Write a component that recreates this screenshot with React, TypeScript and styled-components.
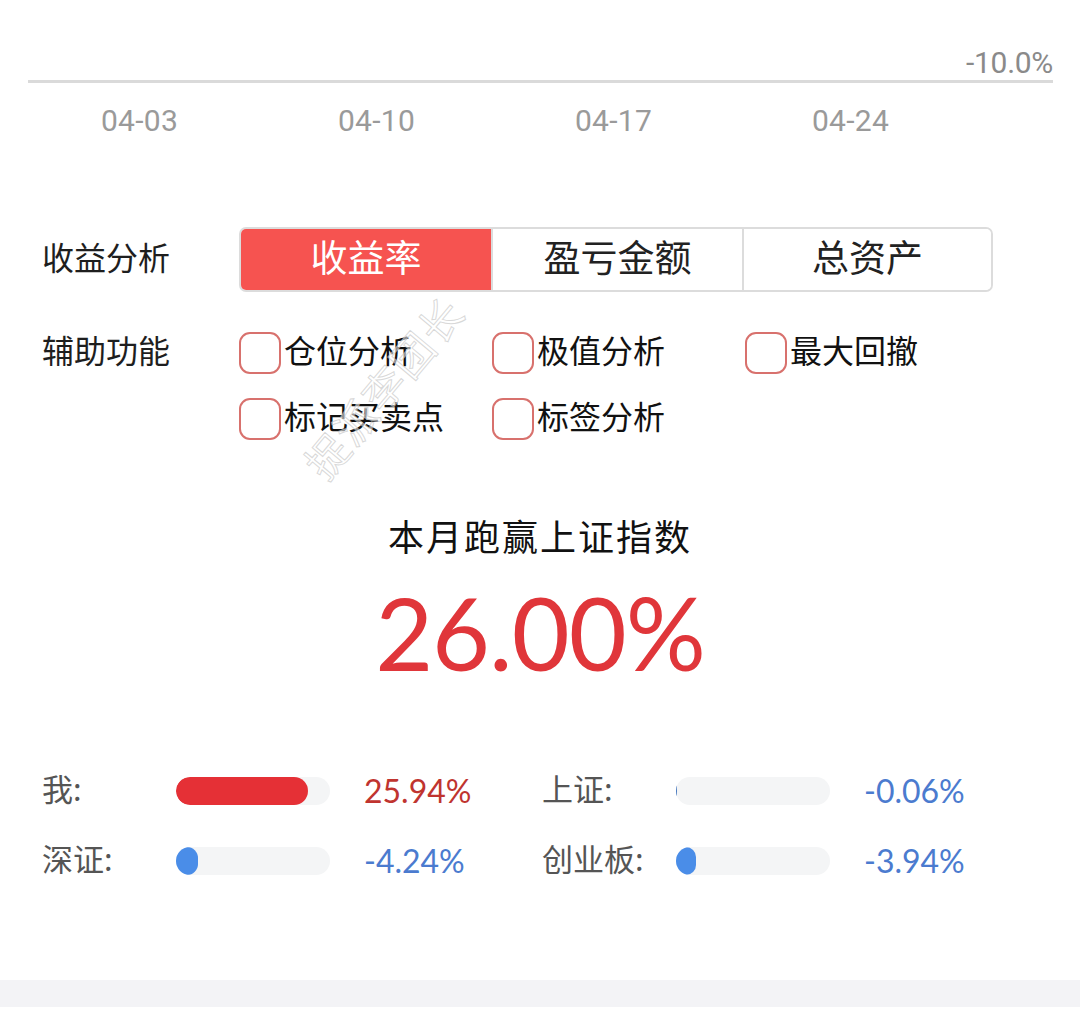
import React from "react";
import styled, { createGlobalStyle } from "styled-components";

const GlobalStyle = createGlobalStyle`
  html, body { margin: 0; padding: 0; background: #ffffff; }
  body { font-family: Lato, "Noto Sans CJK SC", sans-serif; }
`;

const Page = styled.div`
  position: relative;
  width: 1080px;
  height: 1018px;
  overflow: hidden;
  display: flex;
  flex-direction: column;
  background: #ffffff;
`;

const Axis = styled.div`
  padding: 47px 27px 0 28px;
  display: flex;
  flex-direction: column;
`;

const YLabel = styled.div`
  text-align: right;
  font-family: Roboto, sans-serif;
  font-size: 30px;
  line-height: 31px;
  color: #8a8a8a;
  letter-spacing: -0.3px;
`;

const AxisLine = styled.div`
  margin-top: 2px;
  height: 3px;
  background: #dadada;
`;

const DateRow = styled.div`
  margin-top: 22px;
  padding-left: 21px;
  display: grid;
  grid-template-columns: repeat(4, 237px);
`;

const DateLabel = styled.div`
  text-align: center;
  font-family: Roboto, sans-serif;
  font-size: 30px;
  line-height: 32px;
  color: #9a9a9a;
  letter-spacing: 0.3px;
`;

const FieldRow = styled.div<{ $top: number }>`
  margin-top: ${(p) => p.$top}px;
  padding-left: 42px;
  display: flex;
  align-items: flex-start;
`;

const FieldLabel = styled.div<{ $h: number }>`
  width: 197px;
  height: ${(p) => p.$h}px;
  box-sizing: border-box;
  padding-bottom: 8px;
  display: flex;
  align-items: center;
  font-family: "Noto Sans CJK SC", sans-serif;
  font-size: 32px;
  color: #1e1e1e;
`;

const Segmented = styled.div`
  width: 754px;
  height: 65px;
  box-sizing: border-box;
  border: 2px solid #dcdcdc;
  border-radius: 7px;
  display: grid;
  grid-template-columns: 250px 251px 1fr;
  overflow: hidden;
`;

const Segment = styled.div<{ $active?: boolean }>`
  display: flex;
  align-items: center;
  justify-content: center;
  padding-bottom: 7px;
  font-family: "Noto Sans CJK SC", sans-serif;
  font-size: 37px;
  color: ${(p) => (p.$active ? "#ffffff" : "#222222")};
  background: ${(p) => (p.$active ? "#f65350" : "#ffffff")};
  & + & {
    border-left: 2px solid #dcdcdc;
  }
`;

const CheckGrid = styled.div`
  display: grid;
  grid-template-columns: repeat(3, 253px);
  row-gap: 24px;
`;

const CheckItem = styled.label`
  display: flex;
  align-items: center;
  gap: 3px;
  height: 42px;
  font-family: "Noto Sans CJK SC", sans-serif;
  font-size: 32px;
  color: #111111;
  white-space: nowrap;
`;

const CheckText = styled.span`
  padding-bottom: 8px;
`;

const Box = styled.span`
  width: 42px;
  height: 42px;
  box-sizing: border-box;
  border: 2px solid #d8716d;
  border-radius: 11px;
  flex: none;
`;

const Summary = styled.div`
  margin-top: 70px;
  display: flex;
  flex-direction: column;
  align-items: center;
`;

const SummaryTitle = styled.div`
  font-family: "Noto Sans CJK SC", sans-serif;
  font-size: 36px;
  letter-spacing: 2px;
  line-height: 50px;
  color: #111111;
`;

const BigNumber = styled.div`
  margin-top: 12px;
  font-family: Lato, sans-serif;
  font-size: 100px;
  line-height: 120px;
  color: #e0363a;
  letter-spacing: -1px;
`;

const Stats = styled.div`
  margin-top: 73px;
  padding-left: 42px;
  display: grid;
  grid-template-columns: 500px 500px;
  row-gap: 42px;
`;

const StatItem = styled.div`
  display: grid;
  grid-template-columns: 134px 154px auto;
  align-items: center;
  height: 28px;
`;

const StatLabel = styled.div`
  padding-bottom: 6px;
  font-family: "Noto Sans CJK SC", sans-serif;
  font-size: 31px;
  color: #555555;
  white-space: nowrap;
`;

const Track = styled.div`
  height: 28px;
  border-radius: 14px;
  background: #f4f5f6;
  overflow: hidden;
`;

const Fill = styled.div<{ $color: string; $thin?: boolean }>`
  height: 100%;
  background: ${(p) => p.$color};
  border-radius: ${(p) => (p.$thin ? "0" : "14px")};
`;

const StatValue = styled.div<{ $color: string }>`
  padding-left: 34px;
  font-family: Lato, sans-serif;
  font-size: 32px;
  color: ${(p) => p.$color};
`;

const Footer = styled.div`
  margin-top: auto;
  margin-bottom: 11px;
  height: 27px;
  background: #f3f3f6;
`;

const Watermark = styled.div`
  position: absolute;
  left: 312px;
  top: 440px;
  transform: rotate(-50deg);
  transform-origin: left center;
  font-family: "Noto Sans CJK SC", sans-serif;
  font-size: 42px;
  letter-spacing: 2px;
  color: rgba(255, 255, 255, 0.55);
  -webkit-text-stroke: 1px rgba(190, 190, 190, 0.6);
  pointer-events: none;
  white-space: nowrap;
`;

const checks = ["仓位分析", "极值分析", "最大回撤", "标记买卖点", "标签分析"];

type Stat = {
  label: string;
  value: string;
  width: string;
  fill: string;
  text: string;
  thin?: boolean;
};

const stats: Stat[] = [
  { label: "我:", value: "25.94%", width: "86%", fill: "#e53036", text: "#c0342f" },
  { label: "上证:", value: "-0.06%", width: "1px", fill: "#4a7bc0", text: "#4b7bcf", thin: true },
  { label: "深证:", value: "-4.24%", width: "22px", fill: "#4a8de8", text: "#4b7bcf" },
  { label: "创业板:", value: "-3.94%", width: "20px", fill: "#4a8de8", text: "#4b7bcf" },
];

export default function App() {
  return (
    <>
      <GlobalStyle />
      <Page>
        <Axis>
          <YLabel>-10.0%</YLabel>
          <AxisLine />
        </Axis>
        <DateRow>
          {["04-03", "04-10", "04-17", "04-24"].map((d) => (
            <DateLabel key={d}>{d}</DateLabel>
          ))}
        </DateRow>

        <FieldRow $top={90}>
          <FieldLabel $h={65}>收益分析</FieldLabel>
          <Segmented>
            <Segment $active>收益率</Segment>
            <Segment>盈亏金额</Segment>
            <Segment>总资产</Segment>
          </Segmented>
        </FieldRow>

        <FieldRow $top={40}>
          <FieldLabel $h={42}>辅助功能</FieldLabel>
          <CheckGrid>
            {checks.map((c) => (
              <CheckItem key={c}>
                <Box />
                <CheckText>{c}</CheckText>
              </CheckItem>
            ))}
          </CheckGrid>
        </FieldRow>

        <Summary>
          <SummaryTitle>本月跑赢上证指数</SummaryTitle>
          <BigNumber>26.00%</BigNumber>
        </Summary>

        <Stats>
          {stats.map((s) => (
            <StatItem key={s.label}>
              <StatLabel>{s.label}</StatLabel>
              <Track>
                <Fill $color={s.fill} $thin={s.thin} style={{ width: s.width }} />
              </Track>
              <StatValue $color={s.text}>{s.value}</StatValue>
            </StatItem>
          ))}
        </Stats>

        <Footer />
        <Watermark>捉派李团长</Watermark>
      </Page>
    </>
  );
}
